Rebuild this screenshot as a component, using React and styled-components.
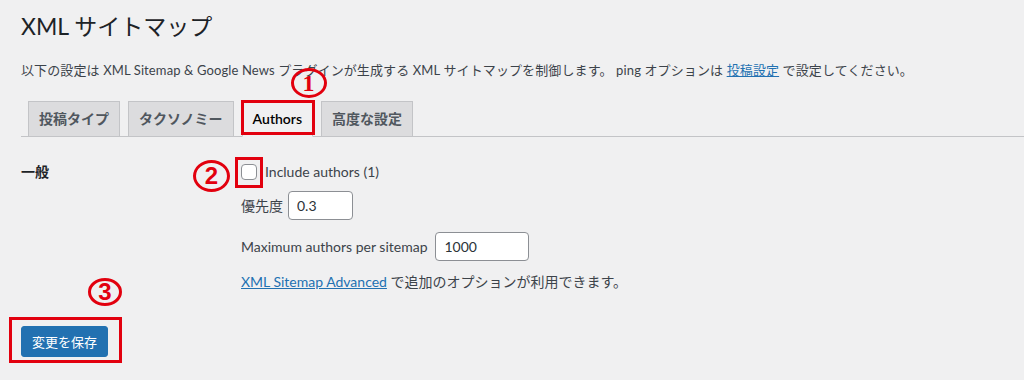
import React from 'react';
import styled, { createGlobalStyle } from 'styled-components';

const GlobalStyle = createGlobalStyle`
  body {
    margin: 0;
    background: #f0f0f1;
    color: #3c434a;
    font-family: "Segoe UI", Lato, "Noto Sans CJK JP", sans-serif;
  }
`;

const ANNOT = '#e2000e';

const Page = styled.div`
  padding: 0 0 0 21px;
  height: 380px;
  overflow: hidden;
`;

const Title = styled.h1`
  margin: 0;
  padding-top: 12px;
  font-size: 23px;
  line-height: 29px;
  font-weight: 400;
  color: #1d2327;
`;

const Intro = styled.p`
  margin: 19px 0 0;
  font-size: 13px;
  line-height: 20px;
  letter-spacing: 0.12px;
  white-space: nowrap;
`;

const Link = styled.a`
  color: #2271b1;
  text-decoration: underline;
`;

const TabBar = styled.nav`
  display: flex;
  align-items: flex-end;
  gap: 8px;
  margin-top: 21px;
  padding-left: 7px;
  border-bottom: 1px solid #c3c4c7;
`;

const Tab = styled.span`
  display: block;
  padding: 5px 10px;
  font-size: 14px;
  line-height: 24px;
  font-weight: 600;
  border: 1px solid #c3c4c7;
  border-bottom: ${p => (p.$active ? '1px solid #f0f0f1' : 'none')};
  margin-bottom: ${p => (p.$active ? '-1px' : '0')};
  background: ${p => (p.$active ? '#f0f0f1' : '#dcdcde')};
  color: ${p => (p.$active ? '#000' : '#50575e')};
`;

/* red annotation frame drawn over a control */
const Marked = styled.span`
  position: relative;
  display: inline-flex;

  &::after {
    content: '';
    position: absolute;
    inset: ${p => p.$inset};
    border: 3px solid ${ANNOT};
    pointer-events: none;
  }
`;

const Badge = styled.span`
  position: absolute;
  left: ${p => p.$left}px;
  top: ${p => p.$top}px;
  width: ${p => p.$w}px;
  height: ${p => p.$h}px;
  box-sizing: border-box;
  border: 3px solid ${ANNOT};
  border-radius: 50%;
  display: flex;
  align-items: center;
  justify-content: center;
  color: ${ANNOT};
  font-family: ${p => (p.$serif ? '"Liberation Serif", serif' : '"Liberation Sans", sans-serif')};
  font-weight: 700;
  font-size: 24px;
  line-height: 1;
`;

const FormRow = styled.div`
  display: flex;
  margin-top: 25px;
`;

const RowLabel = styled.div`
  flex: 0 0 210px;
  padding-right: 10px;
  font-size: 14px;
  line-height: 20px;
  font-weight: 600;
  color: #1d2327;
`;

const Fields = styled.div`
  display: flex;
  flex-direction: column;
`;

const Line = styled.div`
  display: flex;
  align-items: center;
  gap: ${p => p.$gap || 5}px;
  margin-top: ${p => p.$mt || 0}px;
  min-height: 20px;
  font-size: 14px;
  line-height: 20px;
`;

const Check = styled.span`
  display: block;
  width: 16px;
  height: 16px;
  box-sizing: border-box;
  border: 1px solid #8c8f94;
  border-radius: 4px;
  background: #fff;
`;

const Input = styled.input`
  box-sizing: border-box;
  width: ${p => p.$w}px;
  height: 29px;
  padding: 0 8px;
  border: 1px solid #8c8f94;
  border-radius: 4px;
  background: #fff;
  color: #2c3338;
  font: inherit;
  font-size: 14px;
`;

const Submit = styled.div`
  margin-top: 34px;
`;

const Button = styled.button`
  height: 31px;
  padding: 0 10px;
  border: 1px solid #2271b1;
  border-radius: 3px;
  background: #2271b1;
  color: #fff;
  font: inherit;
  font-size: 13px;
`;

const tabs = ['投稿タイプ', 'タクソノミー', 'Authors', '高度な設定'];

const App = () => {
  return (
    <>
      <GlobalStyle />
      <Page>
        <Title>XML サイトマップ</Title>
        <Intro>
          以下の設定は XML Sitemap &amp; Google News プラグインが生成する XML サイトマップを制御します。 ping オプションは{' '}
          <Link>投稿設定</Link> で設定してください。
        </Intro>

        <TabBar>
          {tabs.map(t =>
            t === 'Authors' ? (
              <Marked key={t} $inset="-1px -2px 1px -1px">
                <Tab $active>{t}</Tab>
                <Badge $left={49} $top={-33} $w={36} $h={30} $serif>1</Badge>
              </Marked>
            ) : (
              <Tab key={t}>{t}</Tab>
            )
          )}
        </TabBar>

        <FormRow>
          <RowLabel>一般</RowLabel>
          <Fields>
            <Line $gap={8}>
              <Marked $inset="-7px -6px -8px -6px">
                <Check />
                <Badge $left={-48} $top={-4} $w={37} $h={32}>2</Badge>
              </Marked>
              Include authors (1)
            </Line>
            <Line $mt={9} $gap={5}>
              優先度 <Input $w={65} defaultValue="0.3" />
            </Line>
            <Line $mt={12} $gap={8}>
              Maximum authors per sitemap <Input $w={94} defaultValue="1000" />
            </Line>
            <Line $mt={11}>
              <span>
                <Link>XML Sitemap Advanced</Link> で追加のオプションが利用できます。
              </span>
            </Line>
          </Fields>
        </FormRow>

        <Submit>
          <Marked $inset="-9px -14px -6px -12px">
            <Button>変更を保存</Button>
            <Badge $left={67} $top={-48} $w={34} $h={28}>3</Badge>
          </Marked>
        </Submit>
      </Page>
    </>
  );
};

export default App;
